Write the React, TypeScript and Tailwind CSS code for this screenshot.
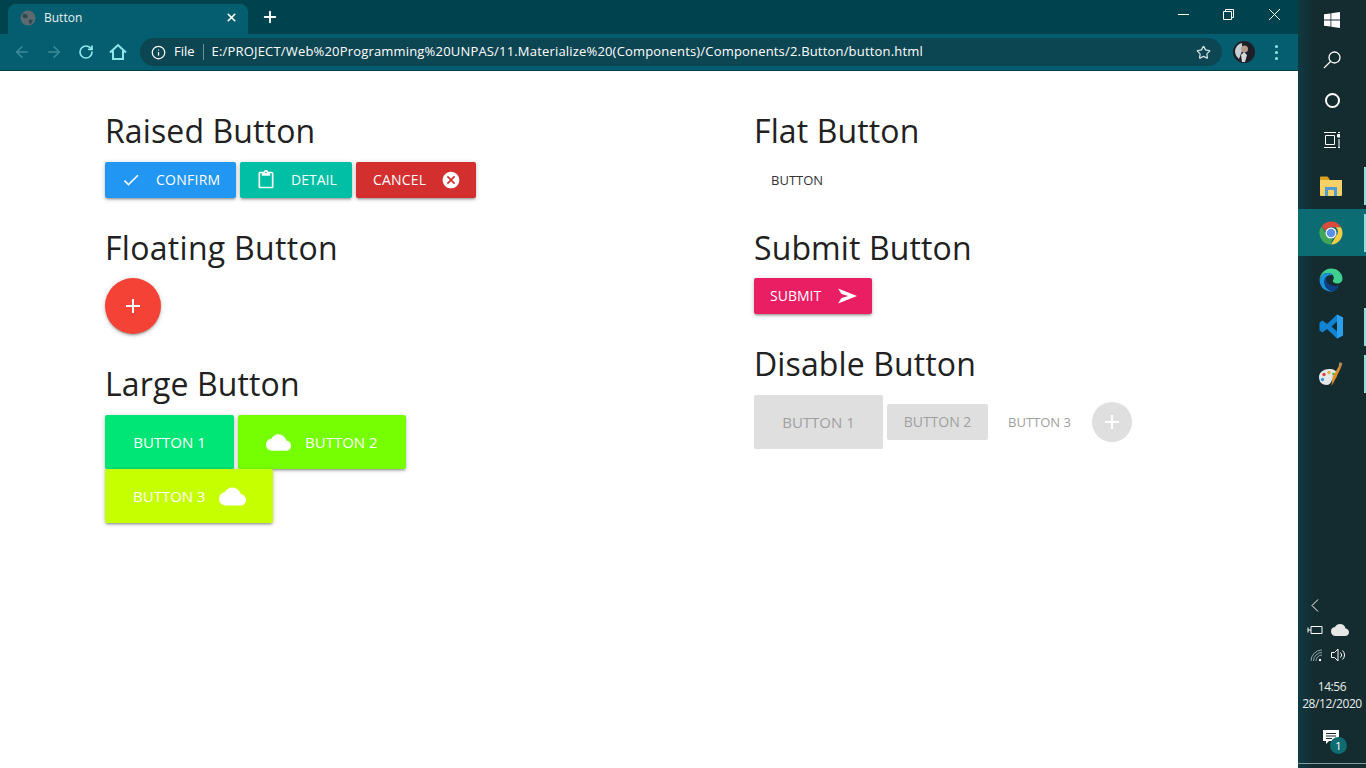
import React from 'react';
import { MdAdd, MdCancel, MdCheck, MdCloud, MdContentPaste } from 'react-icons/md';
import { ArrowLeft, ArrowRight, Info, RotateCw, Star, Plus, X } from 'lucide-react';

const font = "font-['Open_Sans',sans-serif]";

const Heading = ({ children, tight, wide }: { children: React.ReactNode; tight?: boolean; wide?: boolean }) => (
  <h2 className={`h-[46px] ${tight ? 'mb-[7px]' : 'mb-2'} ${wide ? 'tracking-[0.3px]' : 'tracking-[0.12px]'} text-[32px] leading-[46px] text-[#212121]`}>{children}</h2>
);

const Btn = ({ color, width, children, large }: { color: string; width: string; children: React.ReactNode; large?: boolean }) => (
  <div className={`${color} ${width} ${large ? 'h-[54px] text-[15px]' : 'h-9 text-[14px]'} flex items-center rounded-[2px] text-white shadow-[0_2px_2px_rgba(0,0,0,0.14),0_3px_1px_-2px_rgba(0,0,0,0.12),0_1px_5px_rgba(0,0,0,0.2)]`}>
    {children}
  </div>
);

// offset is the nudge that puts the caps on the same line as the screenshot
const Label = ({ className, offset = 'mb-[2px]', children }: { className?: string; offset?: string; children: React.ReactNode }) => (
  <span className={`${offset} whitespace-nowrap ${className ?? ''}`}>{children}</span>
);

const ChromeLogo = () => (
  <svg width="24" height="24" viewBox="0 0 24 24">
    <path d="M12 .5a11.500 11.500 0 0 1 10 5.800H12a5.700 5.700 0 0 0-5.400 3.900L2.700 5.200A11.500 11.500 0 0 1 12 .5z" fill="#dc4a3d" />
    <path d="M22 6.300A11.500 11.500 0 0 1 12 23.500l5-8.500a5.700 5.700 0 0 0-.200-8.700z" fill="#f6cc45" />
    <path d="M12 23.500A11.500 11.500 0 0 1 2.700 5.200l4.500 8.300a5.700 5.700 0 0 0 6.300 4z" fill="#3fa65a" />
    <circle cx="12" cy="12" r="5.500" fill="#fff" />
    <circle cx="12" cy="12" r="4.300" fill="#5b8ee6" />
  </svg>
);

const EdgeLogo = () => (
  <svg width="24" height="24" viewBox="0 0 24 24">
    <path d="M.5 11.500C1.500 4.500 6.500.5 12 .5c7 0 11.500 5 11.500 10 0 3.500-2.500 5-5 5-2.800 0-4.700-1-4.700-2.500 0-1 1-1.500 1-3C14.800 7 12 4.800 8.500 5 4.500 5.200 1.700 8 .5 11.500z" fill="#3fcf8e" />
    <path d="M.5 11.500C1.700 8 4.500 5.200 8.500 5c2-.1 3.800.7 5 2C8 6.500 5 10 5.500 15c.4 4.500 4 8 9 8.300-1 .2-1.700.2-2.500.2C5.500 23.500.5 18.500.5 11.500z" fill="#1c90d8" />
    <path d="M14.500 23.300c-5-.3-8.600-3.800-9-8.300C5.200 12.800 6 10.800 7.500 9.500c-.6 3 .4 5.500 3 7 2.500 1.500 6 2 9.500.7-1.200 3-3.200 5.400-5.500 6.100z" fill="#0c3f86" />
  </svg>
);

const VsCodeLogo = () => (
  <svg width="24" height="25" viewBox="0 0 24 25">
    <path d="M18 0.500L24 3.500V21.500L18 24.500L8 15L3.500 18.500L0.500 16.500V8.500L3.500 6.500L8 10ZM18 7.500L12.500 12.500L18 17.500Z" fill="#1083d2" fillRule="evenodd" />
    <path d="M18 0.500L24 3.500V21.500L18 24.500Z" fill="#2a9fee" />
  </svg>
);

const PaintLogo = () => (
  <svg width="24" height="26" viewBox="0 0 24 26">
    <path d="M0 16c0-5 5-8 10-8 5 0 8 2 8 5 0 4-3 4-5 6-1 2-2 5-5 5-5 0-8-3-8-8z" fill="#e4e8e8" />
    <circle cx="5" cy="13.500" r="1.700" fill="#d9483b" />
    <circle cx="10" cy="11.500" r="1.700" fill="#e0b13d" />
    <circle cx="14.500" cy="13" r="1.500" fill="#5cb85c" />
    <circle cx="3.500" cy="18.500" r="1.700" fill="#3d9be0" />
    <path d="M20 5l2 1.500L17 17l-4.500 8 1-9z" fill="#d98f2b" />
    <path d="M19.500 5.500l1-4.500 3 1.500-1.500 4z" fill="#b08a58" />
  </svg>
);

const FolderLogo = () => (
  <svg width="24" height="20" viewBox="0 0 24 20">
    <path d="M1 1.500C1 .8 1.500.5 2 .5h6.500L10.500 3v1.500H1z" fill="#dca023" />
    <path d="M1 4h22v15a1 1 0 0 1-1 1H2a1 1 0 0 1-1-1z" fill="#f6d167" />
    <path d="M6 11h12v9h-3v-6H9v6H6z" fill="#4f9bd2" />
  </svg>
);

const TaskCell = ({ active, strip, children }: { active?: boolean; strip?: boolean; children: React.ReactNode }) => (
  <div className={`h-[47px] flex items-center ${active ? 'bg-[#0b6d73]' : ''}`}>
    <div className="flex-1 flex justify-center">{children}</div>
    <div className={`w-[2px] h-[38px] ${strip || active ? 'bg-[#8fdede]' : ''}`} />
  </div>
);

export default function App() {
  return (
    <div className={`${font} w-[1366px] h-[768px] flex overflow-hidden bg-white`}>
      <div className="w-[1298px] flex flex-col">
        {/* tab strip */}
        <div className="h-[34px] bg-[#00434f] flex items-end pl-2 text-white">
          <div className="w-[240px] h-[30px] bg-[#045e6f] rounded-t-lg flex items-center pb-[3px] pl-3 pr-[10px]">
            <svg width="16" height="16" viewBox="0 0 16 16">
              <circle cx="8" cy="8" r="7.500" fill="#5d6a70" />
              <path d="M3 3.500l4 1 1 2.500-3 1.500L2.500 7zM9 9.500l4 .5-2 4-2-1z" fill="#2f4852" />
            </svg>
            <span className="ml-2 flex-1 text-[12px] text-[#e8f1f3]">Button</span>
            <X size={13} strokeWidth={3} />
          </div>
          <div className="ml-[13px] mb-[8px]"><Plus size={18} strokeWidth={2.500} /></div>
          <div className="flex-1" />
          <div className="flex items-center h-full pb-[6px] pr-[17px] gap-[34px]">
            <div className="w-[11px] h-px bg-white" />
            <svg width="11" height="11" viewBox="0 0 11 11" fill="none" stroke="#fff">
              <path d="M.5 2.500h8v8h-8zM2.500 2.500v-2h8v8h-2" />
            </svg>
            <svg width="13" height="13" viewBox="0 0 13 13" stroke="#fff" strokeWidth="1">
              <path d="M1 1l11 11M12 1L1 12" />
            </svg>
          </div>
        </div>
        {/* toolbar */}
        <div className="h-[37px] bg-[#045e6f] border-b border-[#023c48] flex items-center pl-[13px] pr-[14px]">
          <div className="w-[32px] text-[#3d8c9b]"><ArrowLeft size={18} /></div>
          <div className="w-[32px] text-[#3d8c9b]"><ArrowRight size={18} /></div>
          <div className="w-[32px] text-[#8de8ec]"><RotateCw size={16} strokeWidth={2.500} className="ml-[1px]" /></div>
          <div className="w-[24px] text-[#8de8ec]">
            <svg width="18" height="18" viewBox="0 0 18 18" fill="none" stroke="currentColor" strokeWidth="2">
              <path d="M1 9.500L9 2l8 7.500M4 7.500V16h10V7.500" />
            </svg>
          </div>
          <div className="w-[1082px] ml-[7px] h-[28px] rounded-full bg-[#0d4653] flex items-center pl-[11px] pr-[11px] text-[13px] text-white">
            <Info size={15} />
            <span className="ml-[8px]">File</span>
            <span className="w-px h-[16px] bg-[#6d929b] ml-[8px] mr-[8px]" />
            <span className="flex-1 whitespace-nowrap tracking-[0.18px]">E:/PROJECT/Web%20Programming%20UNPAS/11.Materialize%20(Components)/Components/2.Button/button.html</span>
            <Star size={15} className="text-[#cfe0e4]" />
          </div>
          <svg width="22" height="22" viewBox="0 0 22 22" className="ml-[11px]">
            <circle cx="11" cy="11" r="11" fill="#1d1f28" />
            <path d="M4 5a9 9 0 0 1 5-3v8l-3 8a9 9 0 0 1-2-13z" fill="#c9d0d4" />
            <circle cx="11.500" cy="8" r="3.500" fill="#b59a8c" />
            <path d="M8 14l3-3 3 3-2 7h-3z" fill="#d8d8d8" />
          </svg>
          <div className="ml-[20px] flex flex-col gap-[3px]">
            <span className="w-[3px] h-[3px] rounded-full bg-[#8de8ec]" />
            <span className="w-[3px] h-[3px] rounded-full bg-[#8de8ec]" />
            <span className="w-[3px] h-[3px] rounded-full bg-[#8de8ec]" />
          </div>
        </div>
        {/* page */}
        <div className="flex-1 bg-white pl-[105px] pt-[37px] grid grid-cols-[649px_1fr] content-start">
          <div>
            <Heading>Raised Button</Heading>
            <div className="flex gap-1">
              <Btn color="bg-[#2196f3]" width="w-[131px] pl-[16px]">
                <MdCheck size={20} />
                <Label className="ml-[15px] tracking-[0.25px]">CONFIRM</Label>
              </Btn>
              <Btn color="bg-[#00bfa5]" width="w-[112px] pl-[16px]">
                <MdContentPaste size={20} />
                <Label className="ml-[15px]">DETAIL</Label>
              </Btn>
              <Btn color="bg-[#d32f2f]" width="w-[120px] pl-[16px]">
                <Label className="tracking-[0.2px] ml-[1px]">CANCEL</Label>
                <MdCancel size={20} className="ml-[15px]" />
              </Btn>
            </div>
            <div className="mt-[27px]">
              <Heading tight wide>Floating Button</Heading>
              <div className="w-14 h-14 rounded-full bg-[#f44336] text-white flex items-center justify-center shadow-[0_2px_2px_rgba(0,0,0,0.14),0_3px_1px_-2px_rgba(0,0,0,0.12),0_1px_5px_rgba(0,0,0,0.2)]">
                <MdAdd size={24} />
              </div>
            </div>
            <div className="mt-[27px]">
              <Heading>Large Button</Heading>
              <div className="flex flex-wrap gap-x-1 w-[400px]">
                <Btn large color="bg-[#00e676]" width="w-[129px] justify-center"><Label offset="mb-0">BUTTON 1</Label></Btn>
                <Btn large color="bg-[#76ff03]" width="w-[168px] pl-[28px]">
                  <MdCloud size={25} />
                  <Label offset="mb-0" className="ml-[14px]">BUTTON 2</Label>
                </Btn>
                <Btn large color="bg-[#c6ff00]" width="w-[168px] pl-[28px]">
                  <Label offset="mb-0">BUTTON 3</Label>
                  <MdCloud size={27} className="ml-[13px]" />
                </Btn>
              </div>
            </div>
          </div>
          <div>
            <Heading>Flat Button</Heading>
            <div className="h-9 flex items-center pl-[17px] text-[13px] text-[#343434]"><Label offset="mt-[2px]">BUTTON</Label></div>
            <div className="mt-[27px]">
              <Heading tight>Submit Button</Heading>
              <Btn color="bg-[#e91e63]" width="w-[118px] pl-[16px]">
                <Label>SUBMIT</Label>
                <svg width="19" height="16" viewBox="0 0 19 16" fill="#fff" className="ml-[17px]">
                  <path d="M0 .5L19 8 0 15.500l3.500-5.500 7-2-7-2z" />
                </svg>
              </Btn>
            </div>
            <div className="mt-[27px]">
              <Heading>Disable Button</Heading>
              <div className="flex items-center text-[14px] text-[#9f9f9f]">
                <div className="w-[129px] h-[54px] bg-[#dfdfdf] rounded-[2px] flex items-center justify-center text-[15px]"><Label offset="mb-0">BUTTON 1</Label></div>
                <div className="w-[101px] h-9 ml-1 bg-[#dfdfdf] rounded-[2px] flex items-center justify-center"><Label>BUTTON 2</Label></div>
                <div className="w-[64px] ml-5 flex text-[13px]"><Label offset="mt-[2px]">BUTTON 3</Label></div>
                <div className="w-10 h-10 ml-5 rounded-full bg-[#dfdfdf] text-white flex items-center justify-center">
                  <MdAdd size={24} />
                </div>
              </div>
            </div>
          </div>
        </div>
      </div>
      {/* taskbar */}
      <div className="w-[68px] flex flex-col text-white bg-[linear-gradient(90deg,#0f3a42_0,#142b2f_25%,#142b2f_100%)]">
        <div className="h-10 flex items-center justify-center">
          <svg width="16" height="16" viewBox="0 0 16 16" fill="#fff">
            <path d="M0 2.300l6.500-.9v6.200H0zM7.300 1.300L16 0v7.600H7.300zM0 8.400h6.500v6.200L0 13.700zM7.300 8.400H16V16l-8.700-1.300z" />
          </svg>
        </div>
        <div className="h-10 flex items-center justify-center">
          <svg width="18" height="18" viewBox="0 0 18 18" fill="none" stroke="#fff" strokeWidth="1.300">
            <circle cx="11.500" cy="6.500" r="5.500" />
            <path d="M7.500 10.500L1 17" />
          </svg>
        </div>
        <div className="h-10 flex items-center justify-center">
          <div className="w-[15px] h-[15px] rounded-full border-2 border-white" />
        </div>
        <div className="h-10 flex items-center justify-center">
          <svg width="16" height="16" viewBox="0 0 16 16" fill="none" stroke="#fff">
            <path d="M0 .5h12M0 15.500h12M1.500 3.500h9v9h-9zM14 .5h2M14 15.500h2M15 7v8" />
            <path d="M13.500 2.500h2.500v2.500h-2.500z" fill="#fff" />
          </svg>
        </div>
        <div className="h-[2px]" />
        <TaskCell strip><FolderLogo /></TaskCell>
        <TaskCell active><ChromeLogo /></TaskCell>
        <TaskCell><EdgeLogo /></TaskCell>
        <TaskCell strip><VsCodeLogo /></TaskCell>
        <TaskCell strip><PaintLogo /></TaskCell>
        <div className="flex-1" />
        <div className="pl-[12px] h-[22px] flex items-center">
          <svg width="10" height="13" viewBox="0 0 10 13" fill="none" stroke="#fff"><path d="M8 .5L2 6.500l6 6" /></svg>
        </div>
        <div className="h-[28px] flex items-center pl-[9px] gap-[8px]">
          <svg width="16" height="10" viewBox="0 0 16 10" fill="none" stroke="#fff">
            <path d="M4 1.500h11v7H4zM1 5h3M1 2.500v5" />
          </svg>
          <MdCloud size={18} className="text-[#e6e6e6]" />
        </div>
        <div className="h-[24px] flex items-center pl-[12px] pb-[2px] gap-[8px]">
          <svg width="13" height="13" viewBox="0 0 13 13" fill="none" stroke="#8fa5a8">
            <path d="M1 12a11 11 0 0 1 11-11M3.500 12a8.500 8.500 0 0 1 8.500-8.500M6 12a6 6 0 0 1 6-6" />
            <circle cx="10" cy="11" r="1.200" fill="#fff" stroke="none" />
          </svg>
          <svg width="16" height="14" viewBox="0 0 16 14" fill="none" stroke="#fff">
            <path d="M.5 4.500h3l3.500-3.500v12l-3.500-3.500h-3zM9.500 4.500a3.500 3.500 0 0 1 0 5M11.500 2.500a6 6 0 0 1 0 9" />
          </svg>
        </div>
        <div className="mt-[10px] text-[12px] leading-[17px] text-center text-[#e8eeee] whitespace-nowrap tracking-[-0.4px]">
          <div>14:56</div>
          <div>28/12/2020</div>
        </div>
        <div className="h-[51px] flex items-center justify-center">
          <div className="relative -translate-x-[1px]">
            <svg width="16" height="15" viewBox="0 0 16 15" fill="#fff">
              <path d="M0 0h16v11H6l-3 3v-3H0z" />
              <path d="M3 3.500h10M3 6h10M3 8.500h6" stroke="#142b2f" />
            </svg>
            <span className="absolute left-[7px] top-[7px] w-[17px] h-[17px] rounded-full bg-[#0f6c72] text-[11px] leading-[17px] text-center">1</span>
          </div>
        </div>
        <div className="h-[1px] bg-[#8a9a9c] mb-[4px]" />
      </div>
    </div>
  );
}
